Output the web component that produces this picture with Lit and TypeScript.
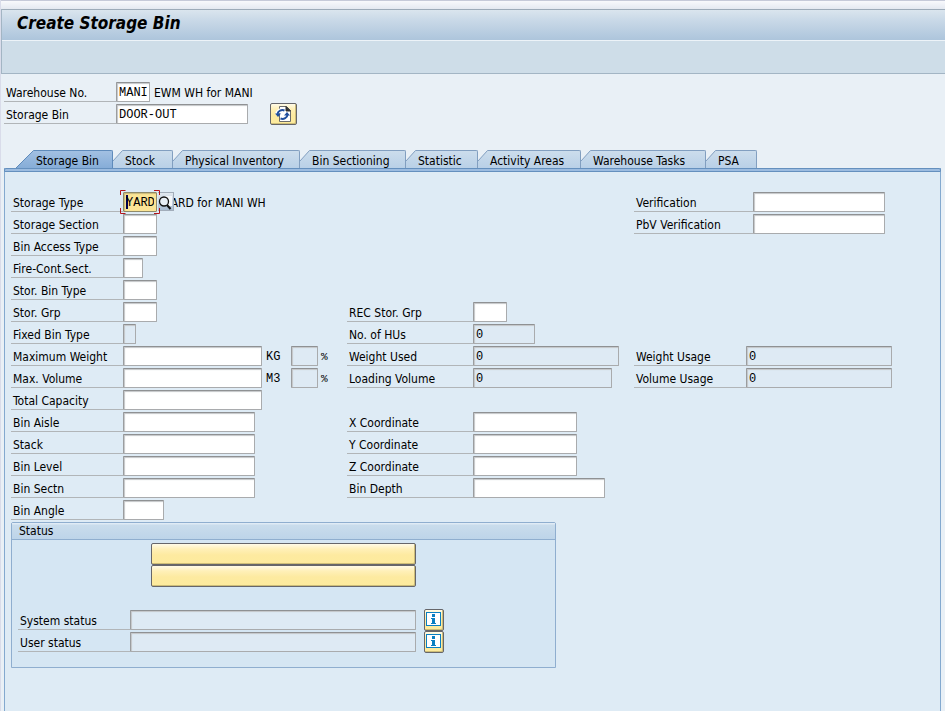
import { LitElement, html, svg, css, nothing } from "lit";
import { customElement, property, state } from "lit/decorators.js";
import { classMap } from "lit/directives/class-map.js";
import { styleMap } from "lit/directives/style-map.js";

interface Field {
  id: string;
  label: string;
  chars: number;
  value?: string;
  readonly?: boolean;
  wide?: boolean;
  unit?: string;
  matchcode?: boolean;
  text?: string;
}

const CHAR_WIDTH = 7;
const FIELD_CHROME = 6;

const TABS: { label: string; width: number }[] = [
  { label: "Storage Bin", width: 97 },
  { label: "Stock", width: 60 },
  { label: "Physical Inventory", width: 127 },
  { label: "Bin Sectioning", width: 106 },
  { label: "Statistic", width: 72 },
  { label: "Activity Areas", width: 103 },
  { label: "Warehouse Tasks", width: 125 },
  { label: "PSA", width: 51 },
];

const HEADER: Field[] = [
  { id: "whno", label: "Warehouse No.", chars: 4, value: "MANI", text: "EWM WH for MANI" },
  { id: "bin", label: "Storage Bin", chars: 18, value: "DOOR-OUT" },
];

const NONE = undefined;

const ROWS: (Field | undefined)[][] = [
  [
    { id: "type", label: "Storage Type", chars: 4, value: "YARD", matchcode: true, text: "YARD for MANI WH" },
    NONE,
    { id: "verif", label: "Verification", chars: 18, wide: true },
  ],
  [{ id: "section", label: "Storage Section", chars: 4 }, NONE, { id: "pbv", label: "PbV Verification", chars: 18, wide: true }],
  [{ id: "access", label: "Bin Access Type", chars: 4 }],
  [{ id: "fire", label: "Fire-Cont.Sect.", chars: 2 }],
  [{ id: "bintype", label: "Stor. Bin Type", chars: 4 }],
  [{ id: "grp", label: "Stor. Grp", chars: 4 }, { id: "rec", label: "REC Stor. Grp", chars: 4 }],
  [
    { id: "fixed", label: "Fixed Bin Type", chars: 1, readonly: true },
    { id: "hus", label: "No. of HUs", chars: 8, value: "0", readonly: true },
  ],
  [
    { id: "maxw", label: "Maximum Weight", chars: 19, unit: "KG" },
    { id: "wused", label: "Weight Used", chars: 20, value: "0", readonly: true },
    { id: "wusage", label: "Weight Usage", chars: 20, value: "0", readonly: true },
  ],
  [
    { id: "maxv", label: "Max. Volume", chars: 19, unit: "M3" },
    { id: "lvol", label: "Loading Volume", chars: 19, value: "0", readonly: true },
    { id: "vusage", label: "Volume Usage", chars: 20, value: "0", readonly: true },
  ],
  [{ id: "cap", label: "Total Capacity", chars: 19 }],
  [{ id: "aisle", label: "Bin Aisle", chars: 18 }, { id: "x", label: "X Coordinate", chars: 14 }],
  [{ id: "stack", label: "Stack", chars: 18 }, { id: "y", label: "Y Coordinate", chars: 14 }],
  [{ id: "level", label: "Bin Level", chars: 18 }, { id: "z", label: "Z Coordinate", chars: 14 }],
  [{ id: "sectn", label: "Bin Sectn", chars: 18 }, { id: "depth", label: "Bin Depth", chars: 18 }],
  [{ id: "angle", label: "Bin Angle", chars: 5 }],
];

const STATUS: Field[] = [
  { id: "sys", label: "System status", chars: 40, readonly: true },
  { id: "user", label: "User status", chars: 40, readonly: true },
];

const fieldStyles = css`
  * {
    box-sizing: border-box;
  }
  .label {
    flex: none;
    height: 20px;
    padding: 2px 0 0 2px;
    border-bottom: 1px solid #b1b5b8;
    line-height: 18px;
    white-space: nowrap;
  }
  .input {
    flex: none;
    height: 20px;
    margin: 0;
    padding: 2px 2px 0 2px;
    border: 1px solid #a9abad;
    border-top-color: #8f9193;
    border-left-color: #9b9d9f;
    border-radius: 1px;
    outline: none;
    background: #fff;
    box-shadow: inset 1px 1px 1px #c4c6c8;
    color: #000;
    font: 12px "Liberation Mono", monospace;
  }
  .input.readonly {
    background: #deeaf4;
  }
`;

@customElement("sap-field")
class SapField extends LitElement {
  @property({ attribute: false }) field!: Field;

  static styles = [
    fieldStyles,
    css`
      :host {
        display: flex;
        min-width: 0;
      }
      .label {
        width: var(--label-width, 112px);
      }
      .box {
        position: relative;
        display: flex;
        flex: none;
      }
      .text {
        padding: 2px 0 0 4px;
        line-height: 18px;
        white-space: nowrap;
      }
      .text.behind {
        padding-left: 8px;
      }
      .unit {
        width: 29px;
        padding-left: 4px;
        font: 12px/22px "Liberation Mono", monospace;
      }
      .percent {
        padding-left: 3px;
        font: 11px/22px "Liberation Mono", monospace;
      }
      .input.focused {
        border-color: #8f8a6a;
        background: linear-gradient(#00004c, #00004c) 2px 2px / 2px 14px no-repeat, #fbe596;
        box-shadow: inset 1px 1px 1px #c9b878;
      }
      .corners {
        position: absolute;
        z-index: 1;
        left: -3px;
        top: -2px;
        width: 40px;
        height: 24px;
        pointer-events: none;
      }
      .search {
        position: absolute;
        left: 35px;
        top: 0;
        width: 16px;
        height: 19px;
        padding: 0;
        border: 1px solid #a2adba;
        border-width: 1px 1px 1px 0;
        background: linear-gradient(#e2e9f0, #a9bdd3);
      }
      .glass {
        display: block;
        width: 15px;
        height: 17px;
      }
    `,
  ];

  private input(id: string, chars: number, value: string, readonly: boolean, focused = false, aria?: string) {
    return html`<input
      class=${classMap({ input: true, readonly, focused })}
      id=${id}
      type="text"
      aria-label=${aria ?? nothing}
      style=${styleMap({ width: `${chars * CHAR_WIDTH + FIELD_CHROME}px` })}
      .value=${value}
      ?readonly=${readonly}
    />`;
  }

  render() {
    const f = this.field;
    return html`
      <label class="label" for=${f.id}>${f.label}</label>
      <span class="box">
        ${this.input(f.id, f.chars, f.value ?? "", !!f.readonly, f.matchcode)}
        ${f.matchcode
          ? html`
              <button class="search" aria-label="Search help">
                <svg class="glass" viewBox="0 0 15 17">
                  <path d="M6 3h8v10H6z" fill="#f4f7fa" />
                  <circle cx="6" cy="8.500" r="4.500" fill="#e8eff6" stroke="#111" stroke-width="1.3" />
                  <path d="M9 12l3.500 4" stroke="#111" stroke-width="2" />
                </svg>
              </button>
              <svg class="corners" viewBox="0 0 40 24">
                <path
                  d="M5.500 .5H.5V5M34 .5h5.500V5M.5 18v5.500h5M39.500 18v5.500h-5.500"
                  fill="none"
                  stroke="#b3151b"
                />
              </svg>
            `
          : nothing}
      </span>
      ${f.text ? html`<span class=${classMap({ text: true, behind: !!f.matchcode })}>${f.text}</span>` : nothing}
      ${f.unit
        ? html`<span class="unit">${f.unit}</span>
            ${this.input(`${f.id}-tol`, 3, "", true, false, `${f.label} tolerance`)}
            <span class="percent">%</span>`
        : nothing}
    `;
  }
}

@customElement("app-root")
class AppRoot extends LitElement {
  @state() private active = 0;

  static styles = [
    fieldStyles,
    css`
      :host {
        display: flex;
        flex-direction: column;
        min-height: 100vh;
        box-sizing: border-box;
        border-left: 1px solid #d9dcea;
        background: #e9f0f6;
        color: #000;
        font: 12px "DejaVu Sans Condensed", "Noto Sans", sans-serif;
      }
      button {
        margin: 0;
        font: inherit;
        color: inherit;
      }
      .strip {
        height: 9px;
        border-top: 1px solid #c6cad9;
        background: linear-gradient(#f8f9fc, #e4e9f1);
      }
      .header {
        border: 1px solid #a3b5c4;
        border-top-color: #9dabb9;
        border-right: 0;
        background: #cedde8;
      }
      .title {
        height: 31px;
        margin: 0;
        padding-left: 15px;
        border-bottom: 1px solid #edf3f8;
        background: linear-gradient(#dae5ee, #cbdae8 30%, #adc5dc);
        font-size: 17px;
        font-weight: bold;
        font-style: italic;
        line-height: 26px;
      }
      .toolbar {
        height: 32px;
      }
      .key {
        display: flex;
        gap: 17px;
        align-items: flex-end;
        padding: 8px 0 0 3px;
      }
      .stack {
        display: flex;
        flex-direction: column;
        gap: 2px;
      }
      .yellow {
        display: block;
        flex: none;
        height: 22px;
        padding: 0;
        border: 1px solid #66666a;
        border-radius: 2px;
        background: linear-gradient(#fffbe8, #fff0b8 25%, #fdeaa0 55%, #fdeb9d);
        box-shadow: inset -1px -1px 0 #cdbd78;
      }
      .change {
        width: 27px;
        margin-bottom: -1px;
      }
      .change-icon {
        display: block;
        width: 17px;
        height: 18px;
        margin: 0 auto;
      }
      .tabs {
        display: flex;
        height: 18px;
        margin: 26px 0 0 15px;
      }
      .tab {
        display: flex;
        flex: none;
        height: 18px;
        padding: 0;
        border: 0;
        background: none;
      }
      .slant {
        flex: none;
        display: block;
        width: 10px;
        height: 18px;
      }
      .slant.first {
        width: 18px;
      }
      .caption {
        flex: 1;
        height: 18px;
        padding: 1px 0 0 2px;
        border: 1px solid #829fc0;
        border-width: 1px 1px 0 0;
        border-top-right-radius: 2px;
        background: linear-gradient(#ccddec, #b9d0e7);
        line-height: 19px;
        text-align: left;
        white-space: nowrap;
      }
      .caption.active {
        border-color: #5f8bbb;
        background: linear-gradient(#a2c0e2, #86add8);
      }
      .panel {
        flex: 1;
        margin: 0 4px 0 3px;
        border: 1px solid #83a9cf;
        border-width: 0 1px;
        background: #deebf5;
      }
      .bar {
        height: 4px;
        margin: 0 -1px;
        border: 1px solid #6590be;
        border-radius: 2px 2px 0 0;
        background: #9cbce0;
      }
      .form {
        padding: 20px 5px 0 6px;
      }
      .row {
        display: grid;
        grid-template-columns: 336fr 287fr 301fr;
        height: 20px;
      }
      .middle {
        --label-width: 126px;
      }
      .wide {
        --label-width: 119px;
      }
      .third {
        grid-column: 3;
      }
      .second {
        grid-column: 2;
      }
      .status {
        max-width: 545px;
        margin: 2px 0 42px 6px;
        padding-bottom: 14px;
        border: 1px solid #8faecf;
        border-radius: 2px 2px 0 0;
        background: #d5e6f3;
      }
      .status-title {
        height: 17px;
        margin: 0;
        padding-left: 7px;
        border-bottom: 1px solid #8faecf;
        background: linear-gradient(#e6eff7, #c9dcec 15%, #bdd4e9);
        font-size: 12px;
        font-weight: normal;
        line-height: 16px;
      }
      .actions {
        width: 265px;
        margin: 3px 0 22px 139px;
      }
      .action {
        width: 100%;
      }
      .status-row {
        display: flex;
        gap: 8px;
        align-items: center;
        height: 22px;
        padding-left: 6px;
      }
      .info {
        width: 20px;
      }
      .info-icon {
        display: block;
        width: 16px;
        height: 16px;
        margin: 0 auto;
      }
    `,
  ];

  private slant(index: number) {
    const first = index === 0;
    const on = index === this.active;
    const id = `slant-${index}`;
    const top = on ? "#a2c0e2" : "#ccddec";
    const bottom = on ? "#86add8" : "#b9d0e7";
    return html`<svg class=${classMap({ slant: true, first })} viewBox=${first ? "0 0 18 18" : "0 0 10 18"}>
      ${svg`
        <linearGradient id=${id} x1="0" y1="0" x2="0" y2="18" gradientUnits="userSpaceOnUse">
          <stop offset="0" stop-color=${top} /><stop offset="1" stop-color=${bottom} />
        </linearGradient>
        <path d=${first ? "M0 18L18 0V18Z" : "M0 11L10 0V18H0Z"} fill=${`url(#${id})`} />
        <path d=${first ? "M0 18L17.500 .5H18" : "M0 11L9.500 .5H10"} fill="none" stroke=${on ? "#5f8bbb" : "#829fc0"} />
      `}
    </svg>`;
  }

  private cell(f: Field | undefined, column: number) {
    if (!f) return nothing;
    const classes = classMap({ second: column === 1, middle: column === 1, third: column === 2, wide: !!f.wide });
    return html`<sap-field class=${classes} .field=${f}></sap-field>`;
  }

  render() {
    return html`
      <div class="strip"></div>
      <header class="header">
        <h1 class="title">Create Storage Bin</h1>
        <div class="toolbar"></div>
      </header>

      <section class="key">
        <div class="stack">${HEADER.map((f) => html`<sap-field .field=${f}></sap-field>`)}</div>
        <button class="yellow change" aria-label="Other storage bin">
          <svg class="change-icon" viewBox="0 0 17 18">
            <path d="M4.500 1.500h7l4 4v11h-11z" fill="#fff" stroke="#6b6b6b" />
            <path d="M11 1.500v4.500h4.500z" fill="#333" stroke="#333" />
            <path d="M2 9A5 4.500 0 0 1 9 5.500" fill="none" stroke="#fff" stroke-width="4" />
            <path d="M2.500 9A5 4.500 0 0 1 9.500 5.500" fill="none" stroke="#1f4e9e" stroke-width="2" />
            <path d="M0 8.500h6L3 12z" fill="#1f4e9e" />
            <path d="M12.500 9.500A5 4.500 0 0 1 5.500 13.500" fill="none" stroke="#1f4e9e" stroke-width="2" />
            <path d="M9 10.500h6L12 7z" fill="#1f4e9e" />
          </svg>
        </button>
      </section>

      <div class="tabs" role="tablist">
        ${TABS.map(
          (t, i) => html`<button
            class="tab"
            role="tab"
            aria-selected=${i === this.active}
            style=${styleMap({ width: `${t.width}px` })}
            @click=${() => (this.active = i)}
          >
            ${this.slant(i)}<span class=${classMap({ caption: true, active: i === this.active })}>${t.label}</span>
          </button>`,
        )}
      </div>

      <main class="panel">
        <div class="bar"></div>
        <div class="form stack">
          ${ROWS.map((row) => html`<div class="row">${row.map((f, i) => this.cell(f, i))}</div>`)}
        </div>
        <section class="status">
          <h2 class="status-title">Status</h2>
          <div class="actions">
            <button class="yellow action" aria-label="Status action 1"></button>
            <button class="yellow action" aria-label="Status action 2"></button>
          </div>
          ${STATUS.map(
            (f) => html`<div class="status-row">
              <sap-field .field=${f}></sap-field>
              <button class="yellow info" aria-label=${`${f.label} details`}>
                <svg class="info-icon" viewBox="0 0 16 16">
                  <rect x=".5" y=".5" width="14" height="13" fill="#fff" stroke="#0a7fc2" />
                  <path d="M6 2h3v3H6zM5 6h4v5h1v1H5v-1h1V7H5z" fill="#0a7fc2" />
                </svg>
              </button>
            </div>`,
          )}
        </section>
      </main>
    `;
  }
}
